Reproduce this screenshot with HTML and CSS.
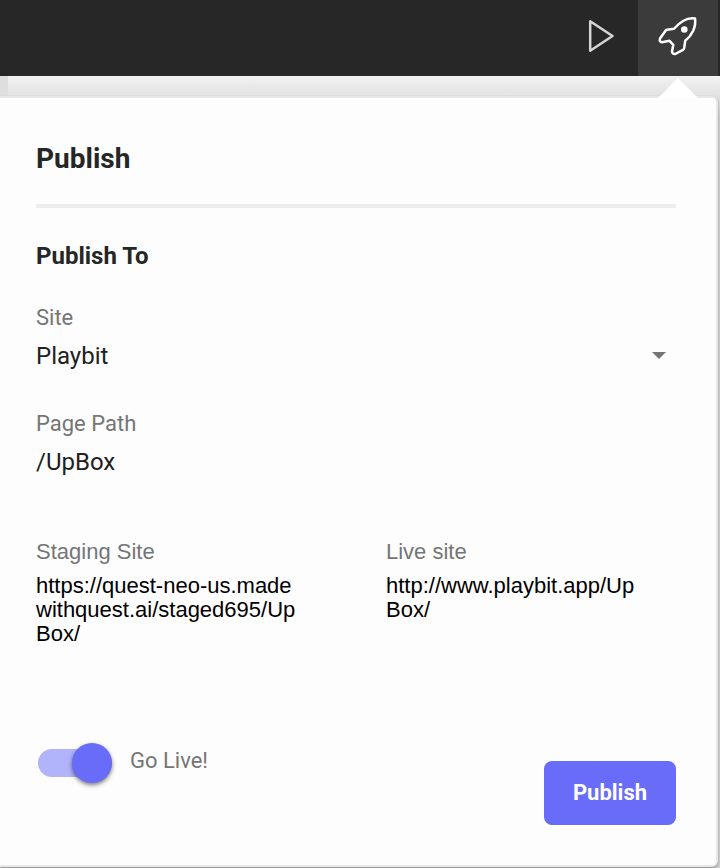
FILE: index.html
```html
<!DOCTYPE html>
<html lang="en">
<head>
  <meta charset="utf-8">
  <title>Publish</title>
  <link rel="stylesheet" href="styles.css">
</head>
<body>
  <header class="toolbar">
    <button type="button" class="tool" aria-label="Preview">
      <svg width="26" height="34" viewBox="0 0 26 34">
        <path d="M2.2 2.2 V31.8 L24.5 17 Z" />
      </svg>
    </button>
    <button type="button" class="tool active" aria-label="Publish page">
      <svg width="40" height="40" viewBox="0 0 40 40">
        <path d="M37 2.5 C33 2 28.5 3 25 5 C21.5 7 18 10.5 16 12.8 L8.8 13.8 Q8 14 7.5 14.8 L2 22.5 Q1 25.8 4 26.2 L11.5 24.8 L15.3 28.8 L14 35.5 Q14.5 38.5 17.3 38 L25 33.8 Q26 33.2 26.2 32 L27.2 24.8 C30.5 22.3 33.5 18.5 35.2 14.8 C36.8 11 37.7 6.5 37 2.5 Z" />
        <circle cx="26.3" cy="13.5" r="3.3" />
      </svg>
    </button>
  </header>

  <main class="canvas">
    <form class="panel">
      <h1>Publish</h1>
      <hr>
      <h2>Publish To</h2>

      <div class="field">
        <label for="site">Site</label>
        <div class="select">
          <select id="site">
            <option>Playbit</option>
          </select>
          <svg width="14" height="7" viewBox="0 0 14 7">
            <path d="M0 0 H14 L7 7 Z" />
          </svg>
        </div>
      </div>

      <div class="field">
        <label for="path">Page Path</label>
        <input type="text" id="path" value="/UpBox">
      </div>

      <div class="urls">
        <div class="url">
          <span>Staging Site</span>
          <a href="https://quest-neo-us.madewithquest.ai/staged695/UpBox/">https://quest-neo-us.madewithquest.ai/staged695/UpBox/</a>
        </div>
        <div class="url">
          <span>Live site</span>
          <a href="http://www.playbit.app/UpBox/">http://www.playbit.app/UpBox/</a>
        </div>
      </div>

      <div class="actions">
        <label class="live">
          <input type="checkbox" class="switch" checked>
          Go Live!
        </label>
        <button type="submit" class="publish">Publish</button>
      </div>
    </form>
  </main>
</body>
</html>
```

FILE: styles.css
```css
* {
  box-sizing: border-box;
}
body {
  margin: 0;
  background-color: #d4d4d4;
  color: #262626;
  font-family: Roboto, sans-serif;
}

/* top bar */
.toolbar {
  display: flex;
  justify-content: flex-end;
  height: 76px;
  padding-right: 2px;
  background-color: #272727;
}
.tool {
  display: flex;
  align-items: center;
  justify-content: center;
  width: 74px;
  padding: 0 0 4px;
  border: none;
  background: none;
  cursor: pointer;
}
.tool path {
  fill: none;
  stroke: #d4d4d4;
  stroke-width: 2.5;
  stroke-linejoin: round;
}
.tool.active {
  width: 80px;
  background-color: #3b3b3b;
}
.tool.active path {
  stroke: #fff;
}
.tool.active circle {
  fill: #fff;
}

/* page behind the panel */
.canvas {
  padding: 20px 2px 1px 0;
  background: linear-gradient(#f2f2f2, #e2e2e2 20px, #cdcdcd 40px);
  box-shadow: inset 8px 0 #dedede;
}
.panel {
  position: relative;
  padding: 43px 40px 40px 36px;
  border: 2px solid #e8e8e8;
  border-left: none;
  border-radius: 0 6px 6px 0;
  background-color: #fdfdfd;
  box-shadow: 0 1px 2px #888;
}
.panel::before {
  content: "";
  position: absolute;
  top: -20px;
  right: 18px;
  border: 20px solid transparent;
  border-top: none;
  border-bottom-color: #fff;
}
h1 {
  margin: 0;
  font-size: 28px;
  line-height: 36px;
}
hr {
  height: 4px;
  margin: 27px 0 32px;
  border: none;
  background-color: #ededed;
}
h2 {
  margin: 0 0 32px;
  font-size: 24px;
  line-height: 32px;
}

/* form fields */
.field {
  margin-bottom: 38px;
}
.field label {
  display: block;
  color: #757575;
  font-size: 22px;
  line-height: 28px;
}
.field select,
.field input {
  display: block;
  width: 100%;
  height: 32px;
  margin-top: 8px;
  padding: 0;
  border: none;
  appearance: none;
  background: none;
  color: #212121;
  font: 24px/32px Roboto, sans-serif;
}
.select {
  position: relative;
}
.select svg {
  position: absolute;
  top: 12px;
  right: 10px;
  fill: #757575;
  pointer-events: none;
}

/* site addresses */
.urls {
  display: grid;
  grid-template-columns: 1fr 1fr;
  gap: 80px;
  margin-top: 60px;
  padding-right: 20px;
  font-family: "Liberation Sans", sans-serif;
  font-size: 22px;
}
.url span {
  display: block;
  margin-bottom: 8px;
  color: #757575;
  line-height: 28px;
}
.url a {
  display: block;
  padding-right: 8px;
  color: #000;
  line-height: 24px;
  text-decoration: none;
  word-break: break-all;
}

/* bottom row */
.actions {
  display: flex;
  align-items: flex-start;
  justify-content: space-between;
  margin-top: 97px;
}
.live {
  display: flex;
  align-items: flex-start;
  gap: 18px;
  color: #757575;
  font-size: 22px;
  line-height: 36px;
}
.switch {
  position: relative;
  width: 74px;
  height: 28px;
  margin: 6px 0 6px 2px;
  border-radius: 14px;
  appearance: none;
  background-color: #b1b3fb;
}
.switch::after {
  content: "";
  position: absolute;
  top: -6px;
  right: 0;
  width: 40px;
  height: 40px;
  border-radius: 50%;
  background-color: #686cf8;
  box-shadow: 0 2px 4px rgba(0,0,0,0.5);
}
.publish {
  width: 132px;
  height: 64px;
  margin-top: 18px;
  padding: 0 0 2px;
  border: none;
  border-radius: 8px;
  background-color: #686cf8;
  color: #fff;
  font: bold 22px Roboto, sans-serif;
  cursor: pointer;
}
```
